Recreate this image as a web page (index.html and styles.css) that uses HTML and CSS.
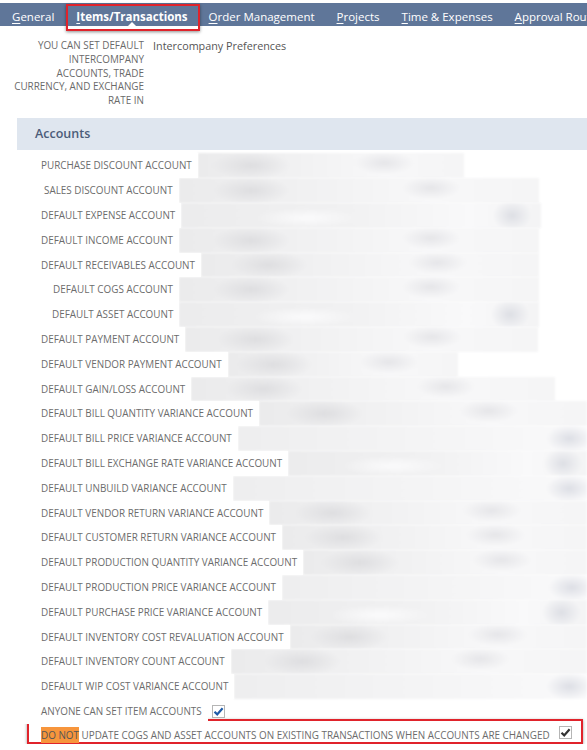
FILE: index.html
```html
<!DOCTYPE html>
<html lang="en">
<head>
  <meta charset="UTF-8">
  <title>Accounting Preferences - Items/Transactions</title>
  <link rel="stylesheet" href="styles.css">
</head>
<body>
<div class="tabs">
  <a class="tab"><u>G</u>eneral</a>
  <a class="tab tab-on"><u>I</u>tems/Transactions</a>
  <a class="tab"><u>O</u>rder Management</a>
  <a class="tab"><u>P</u>rojects</a>
  <a class="tab"><u>T</u>ime &amp; Expenses</a>
  <a class="tab tab-last"><u>A</u>pproval Routing</a>
</div>

<div class="intro">
  <div class="intro-label">You can set default<br>intercompany<br>accounts, trade<br>currency, and exchange<br>rate in</div>
  <div class="intro-value">Intercompany Preferences</div>
</div>

<div class="section-head">Accounts</div>

<div class="rows">
  <div class="row r1"><span class="label">Purchase Discount Account</span><div class="field"></div></div>
  <div class="row r2"><span class="label in1">Sales Discount Account</span><div class="field"></div></div>
  <div class="row r3"><span class="label">Default Expense Account</span><div class="field"></div></div>
  <div class="row r4"><span class="label">Default Income Account</span><div class="field"></div></div>
  <div class="row r5"><span class="label">Default Receivables Account</span><div class="field"></div></div>
  <div class="row r6"><span class="label in2">Default COGS Account</span><div class="field"></div></div>
  <div class="row r7"><span class="label in3">Default Asset Account</span><div class="field"></div></div>
  <div class="row r8"><span class="label">Default Payment Account</span><div class="field"></div></div>
  <div class="row r9"><span class="label">Default Vendor Payment Account</span><div class="field"></div></div>
  <div class="row r10"><span class="label">Default Gain/Loss Account</span><div class="field"></div></div>
  <div class="row r11"><span class="label">Default Bill Quantity Variance Account</span><div class="field"></div></div>
  <div class="row r12"><span class="label">Default Bill Price Variance Account</span><div class="field"></div></div>
  <div class="row r13"><span class="label">Default Bill Exchange Rate Variance Account</span><div class="field"></div></div>
  <div class="row r14"><span class="label">Default Unbuild Variance Account</span><div class="field"></div></div>
  <div class="row r15"><span class="label">Default Vendor Return Variance Account</span><div class="field"></div></div>
  <div class="row r16"><span class="label">Default Customer Return Variance Account</span><div class="field"></div></div>
  <div class="row r17"><span class="label">Default Production Quantity Variance Account</span><div class="field"></div></div>
  <div class="row r18"><span class="label">Default Production Price Variance Account</span><div class="field"></div></div>
  <div class="row r19"><span class="label">Default Purchase Price Variance Account</span><div class="field"></div></div>
  <div class="row r20"><span class="label">Default Inventory Cost Revaluation Account</span><div class="field"></div></div>
  <div class="row r21"><span class="label">Default Inventory Count Account</span><div class="field"></div></div>
  <div class="row r22"><span class="label">Default WIP Cost Variance Account</span><div class="field"></div></div>

  <div class="row">
    <span class="label">Anyone can set item accounts</span>
    <span class="check check-blue">
      <svg width="11" height="11" viewBox="0 0 11 11"><path d="M1.5 5.8 L4.2 8.4 L9.6 2.2" fill="none" stroke="#1f5ba8" stroke-width="2.2"/></svg>
    </span>
  </div>

  <div class="note-box">
    <span class="label"><mark class="hl">Do not</mark> update COGS and asset accounts on existing transactions when accounts are changed</span>
    <span class="check">
      <svg width="11" height="11" viewBox="0 0 11 11"><path d="M1.5 5.8 L4.2 8.4 L9.6 2.2" fill="none" stroke="#333" stroke-width="2.2"/></svg>
    </span>
  </div>
</div>
</body>
</html>
```

FILE: styles.css
```css
body {
  margin: 0;
  background: #fff;
  font-family: "Open Sans", "DejaVu Sans", sans-serif;
  color: #666;
  overflow: hidden;
}

/* tab strip */
.tabs {
  margin-top: 3px;
  height: 23px;
  background: #5f7699;
  display: flex;
  padding-left: 1px;
  white-space: nowrap;
}

.tab {
  flex: none;
  color: #fff;
  font-size: 11.5px;
  padding: 0 11px;
  line-height: 27px;
  height: 23px;
  position: relative;
}

.tab-last {
  flex: 0 1 auto;
  min-width: 0;
  overflow: hidden;
  padding-right: 0;
}

.tab u {
  text-decoration-thickness: 1px;
  text-underline-offset: 2px;
}

.tab-on {
  font-weight: 700;
  margin: 0 -1px 0 0;
}

/* red callout round the selected tab */
.tab-on:before {
  content: '';
  position: absolute;
  left: 1px;
  right: -1px;
  top: 1px;
  bottom: -5px;
  border: 2px solid #e0232b;
  box-shadow: 0 1px 3px rgba(0,0,0,0.45);
  z-index: 2;
}

.tab-on:after {
  content: '';
  position: absolute;
  left: 50%;
  bottom: 0;
  margin-left: -4px;
  border: 4px solid transparent;
  border-bottom-color: #fff;
  border-top: 0;
}

/* intro */
.intro {
  display: flex;
  margin-top: 13px;
}

.intro-label {
  width: 130px;
  margin-left: 14px;
  text-align: right;
  text-transform: uppercase;
  font-size: 9.9px;
  line-height: 13.8px;
  color: #6a6a6a;
  white-space: nowrap;
}

.intro-value {
  margin-left: 9px;
  font-size: 10.8px;
  line-height: 13.8px;
  color: #555;
}

.section-head {
  margin: 10px 0 0 17px;
  height: 32px;
  line-height: 32px;
  padding-left: 18px;
  background: #dfe6ef;
  color: #4b5c79;
  font-size: 12.5px;
  font-weight: 600;
}

/* account rows */
.rows {
  margin-top: 3.5px;
}

.row {
  display: flex;
  align-items: stretch;
  height: 24.8px;
}

.label {
  display: block;
  line-height: 24.8px;
  padding: 0 6px 0 41px;
  background: #fff;
  text-transform: uppercase;
  font-size: 9.9px;
  color: #6c6c6c;
  white-space: nowrap;
  position: relative;
  z-index: 1;
}

.label.in1 { padding-left: 44px; }
.label.in2 { padding-left: 53px; }
.label.in3 { padding-left: 52px; }

.field {
  flex: none;
  background:
    radial-gradient(ellipse 40px 14px at 20% 50%, rgba(215,215,218,0.7), transparent),
    radial-gradient(ellipse 30px 12px at 70% 40%, rgba(222,222,226,0.7), transparent),
    linear-gradient(90deg, #ebebec 0%, #f2f2f3 40%, #f8f8f9 70%, #f5f5f6 100%);
  filter: blur(1.2px);
}

.r1 .field { width: 266px; }
.r2 .field, .r3 .field, .r4 .field, .r6 .field, .r7 .field { width: 360px; }
.r5 .field { width: 338px; }
.r8 .field { width: 353px; }
.r9 .field { width: 230px; }
.r10 .field, .r11 .field, .r12 .field, .r13 .field, .r14 .field, .r15 .field,
.r16 .field, .r17 .field, .r18 .field, .r19 .field, .r20 .field, .r21 .field,
.r22 .field { flex: 1; }
.r10 .field { flex: none; width: 364px; }

.r3 .field, .r7 .field, .r13 .field, .r19 .field {
  background:
    radial-gradient(ellipse 50px 10px at 35% 60%, rgba(252,252,253,0.9), transparent),
    radial-gradient(ellipse 20px 16px at 92% 50%, rgba(215,217,224,0.8), transparent),
    linear-gradient(90deg, #ececed 0%, #f1f1f2 45%, #f9f9fa 80%, #f4f4f5 100%);
}

.r12 .field, .r14 .field, .r18 .field, .r22 .field {
  background:
    radial-gradient(ellipse 24px 14px at 95% 50%, rgba(214,216,224,0.8), transparent),
    linear-gradient(90deg, #eeeeef 0%, #f4f4f5 50%, #fafafb 100%);
}

.check {
  align-self: center;
  width: 11px;
  height: 11px;
  border: 1px solid #b5b5b5;
  background: #fff;
  margin-left: 6px;
  display: flex;
}

.check-blue {
  margin-left: 4px;
}

/* red callout round the last preference */
.note-box {
  display: flex;
  align-items: center;
  height: 21px;
  margin: -5px 4px 0 27px;
  border: 2px solid #e0232b;
  box-shadow: 0 1px 3px rgba(0,0,0,0.4);
}

.note-box .label {
  padding: 9px 0 0 12px;
  line-height: 15px;
  background: none;
  flex: 1;
}

.note-box .check {
  margin: 2px 9px 0 0;
}

.hl {
  background: #f7953c;
  color: #555;
  padding: 1px 0;
}
```
